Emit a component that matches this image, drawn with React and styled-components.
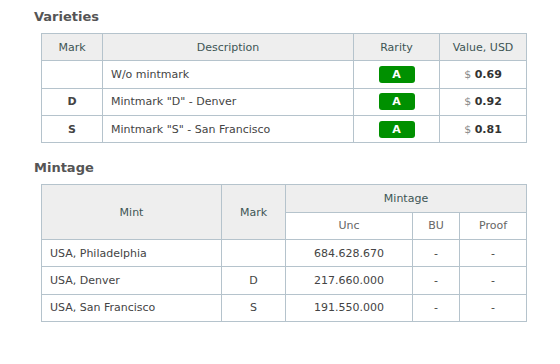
import React from 'react';
import styled, { createGlobalStyle } from 'styled-components';

const GlobalStyle = createGlobalStyle`
	body {
		margin: 0;
		background: #fff;
		font-family: "DejaVu Sans", Verdana, sans-serif;
	}
`;

const Page = styled.div`
	padding: 8px 0 0 34px;
`;

const Heading = styled.h2`
	margin: 0 0 ${(props) => props.gap || 8}px 0;
	font-size: 13px;
	line-height: 17px;
	font-weight: bold;
	color: #555;
`;

const Table = styled.table`
	border-collapse: collapse;
	margin: 0 0 ${(props) => props.after || 0}px 7px;
	width: 486px;
	table-layout: fixed;
	font-size: 11px;
`;

const Th = styled.th`
	height: 26.25px;
	padding: 0;
	border: 1px solid #b5c3cc;
	background: ${(props) => (props.plain ? '#fff' : '#eeeeee')};
	color: ${(props) => (props.plain ? '#666' : '#3d5555')};
	font-weight: normal;
	text-align: center;
	vertical-align: middle;
`;

const Td = styled.td`
	height: 26.4px;
	padding: 0 0 0 ${(props) => (props.left ? 8 : 0)}px;
	border: 1px solid #b5c3cc;
	color: #444;
	text-align: ${(props) => (props.left ? 'left' : 'center')};
	font-weight: ${(props) => (props.bold ? 'bold' : 'normal')};
	vertical-align: middle;
`;

const Badge = styled.span`
	display: inline-block;
	width: 36px;
	height: 17px;
	line-height: 17px;
	border-radius: 3px;
	background: #009000;
	color: #fff;
	font-weight: bold;
	font-size: 11px;
	vertical-align: middle;
`;

const Currency = styled.span`
	color: #888;
`;

const Price = styled.b`
	color: #333;
`;

const varieties = [
	{ mark: '', desc: 'W/o mintmark', value: '0.69' },
	{ mark: 'D', desc: 'Mintmark "D" - Denver', value: '0.92' },
	{ mark: 'S', desc: 'Mintmark "S" - San Francisco', value: '0.81' },
];

const mintage = [
	{ mint: 'USA, Philadelphia', mark: '', unc: '684.628.670' },
	{ mint: 'USA, Denver', mark: 'D', unc: '217.660.000' },
	{ mint: 'USA, San Francisco', mark: 'S', unc: '191.550.000' },
];

const App = () => (
	<Page>
		<GlobalStyle />
		<Heading gap={8}>Varieties</Heading>
		<Table after={16}>
			<colgroup>
				<col style={{ width: 61 }} />
				<col style={{ width: 251 }} />
				<col style={{ width: 86 }} />
				<col style={{ width: 87 }} />
			</colgroup>
			<thead>
				<tr>
					<Th>Mark</Th>
					<Th>Description</Th>
					<Th>Rarity</Th>
					<Th>Value, USD</Th>
				</tr>
			</thead>
			<tbody>
				{varieties.map((v) => (
					<tr key={v.desc}>
						<Td bold>{v.mark}</Td>
						<Td left>{v.desc}</Td>
						<Td><Badge>A</Badge></Td>
						<Td><Currency>$</Currency> <Price>{v.value}</Price></Td>
					</tr>
				))}
			</tbody>
		</Table>

		<Heading gap={8}>Mintage</Heading>
		<Table>
			<colgroup>
				<col style={{ width: 180 }} />
				<col style={{ width: 64 }} />
				<col style={{ width: 127 }} />
				<col style={{ width: 47 }} />
				<col style={{ width: 67 }} />
			</colgroup>
			<thead>
				<tr>
					<Th rowSpan={2}>Mint</Th>
					<Th rowSpan={2}>Mark</Th>
					<Th colSpan={3}>Mintage</Th>
				</tr>
				<tr>
					<Th plain>Unc</Th>
					<Th plain>BU</Th>
					<Th plain>Proof</Th>
				</tr>
			</thead>
			<tbody>
				{mintage.map((m) => (
					<tr key={m.mint}>
						<Td left>{m.mint}</Td>
						<Td>{m.mark}</Td>
						<Td>{m.unc}</Td>
						<Td>-</Td>
						<Td>-</Td>
					</tr>
				))}
			</tbody>
		</Table>
	</Page>
);

export default App;
